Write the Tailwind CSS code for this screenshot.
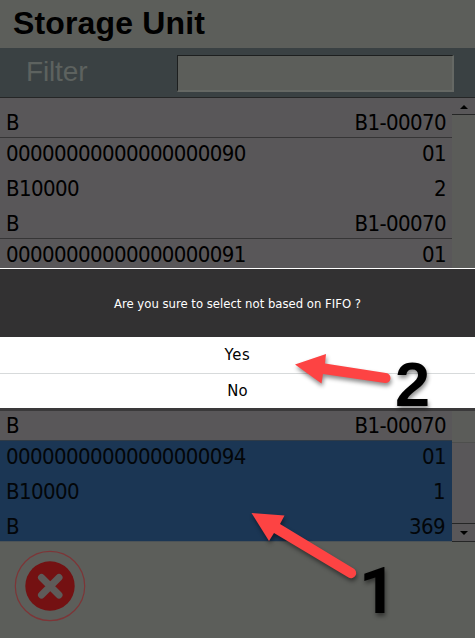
<!DOCTYPE html>
<html lang="en">
<head>
<meta charset="utf-8">
<title>Storage Unit</title>
<script src="https://cdn.jsdelivr.net/npm/@tailwindcss/browser@4"></script>
</head>
<body class="bg-[#5c5e5a]">
<div class="relative w-[475px] h-[638px] overflow-hidden bg-[#5c5e5a] text-black flex flex-col font-['Liberation_Sans',sans-serif]">
  <header class="h-12 shrink-0 pl-[13px] flex items-center"><h1 class="text-[32px] leading-[46px] -mt-[2px] tracking-[0.15px] font-bold whitespace-nowrap">Storage Unit</h1></header>
  <div class="h-[49px] shrink-0 bg-[#3a4143] flex items-start pl-[26px]">
    <span class="w-[151px] text-[28px] leading-[47px] tracking-[-0.15px] text-[#5d625f]">Filter</span>
    <div class="mt-[7px] w-[277px] h-[37px] bg-[#5c5e5a] border-t border-l border-t-[#1d1f1f] border-l-[#1d1f1f] border-b-2 border-r-2 border-b-[#656864] border-r-[#656864]"></div>
  </div>

  <main class="shrink-0 font-['DejaVu_Sans_Condensed','DejaVu_Sans',sans-serif] text-[22px] leading-[34px] tracking-[-0.6px] [font-stretch:condensed]">
    <div class="flex h-[171px] border-t border-[#252626]">
      <div class="w-[452px] h-[170px] overflow-hidden bg-[#595759]">
        <div class="h-[39px] pt-[8px] px-[6px] flex justify-between"><span>B</span><span>B1-00070</span></div>
        <div class="h-[101px] border-t border-[#363536]">
          <div class="h-[33px] px-[6px] flex justify-between"><span class="-mt-px">00000000000000000090</span><span class="-mt-px">01</span></div>
          <div class="h-[35px] pt-[1px] px-[6px] flex justify-between"><span>B10000</span><span>2</span></div>
          <div class="h-[32px] pt-[1px] px-[6px] flex justify-between"><span>B</span><span>B1-00070</span></div>
        </div>
        <div class="h-[29px] border-t border-[#363536] px-[6px] flex justify-between"><span class="-mt-px">00000000000000000091</span><span class="-mt-px">01</span></div>
      </div>
      <div class="w-[23px] bg-[#5b5c59]">
        <div class="h-[17px] bg-[#595759] border-b border-[#252626] flex items-center justify-center"><svg width="8" height="5" viewBox="0 0 8 5"><path d="M0 5L4 1L8 5Z"/></svg></div>
      </div>
    </div>

    <section class="h-[143px] bg-white flex flex-col border-t border-white tracking-normal">
      <div class="h-[68px] bg-[#323132]"><svg class="block" width="475" height="68" role="img"><text x="114" y="39" fill="#fff" font-size="12" textLength="247" lengthAdjust="spacingAndGlyphs">Are you sure to select not based on FIFO ?</text></svg></div>
      <div class="h-[37px] border-b border-[#d7dadb] text-center text-[16.5px] leading-[36px] tracking-[0.7px]">Yes</div>
      <div class="h-[34px] text-center text-[16.5px] leading-[33px] tracking-[0.2px]">No</div>
      <div class="h-[3px] bg-[#3a393a]"></div>
    </section>

    <div class="flex h-[131px]">
      <div class="w-[452px]">
        <div class="h-[29px] bg-[#595759] px-[6px] flex items-center justify-between"><span>B</span><span>B1-00070</span></div>
        <div class="h-[102px] border-t border-b border-t-[#303b46] border-b-[#4c5357] bg-[#1b3654] text-[#030609]">
          <div class="h-[33px] px-[6px] flex justify-between"><span class="-mt-px">00000000000000000094</span><span class="-mt-px">01</span></div>
          <div class="h-[35px] pt-[1px] px-[6px] flex justify-between"><span>B10000</span><span class="mr-[1px]">1</span></div>
          <div class="h-[32px] pt-[1px] px-[6px] flex justify-between"><span>B</span><span class="mr-[1px]">369</span></div>
        </div>
      </div>
      <div class="w-[23px] bg-[#595759] flex flex-col">
        <div class="h-[32px] bg-[#5b5c59] border-b border-[#4e4f4d]"></div>
        <div class="grow"></div>
        <div class="h-[19px] border-t border-b border-[#252626] flex items-center justify-center"><svg width="8" height="4" viewBox="0 0 8 4"><path d="M0 0H8L4 4Z"/></svg></div>
      </div>
    </div>
  </main>

  <footer class="pl-[14px] pt-[8px]">
    <svg class="block" width="72" height="72" viewBox="0 0 72 72">
      <circle cx="36" cy="36" r="34.7" fill="none" stroke="#7d3537" stroke-width="1.2"/>
      <circle cx="36" cy="36" r="24.7" fill="#741112"/>
      <path d="M27.5 27.5L45 45M45 27.5L27.5 45" stroke="#5e5b59" stroke-width="7" stroke-linecap="round"/>
    </svg>
  </footer>

  <svg class="absolute inset-0 [filter:drop-shadow(1px_3px_2px_rgba(0,0,0,.45))]" width="475" height="638" viewBox="0 0 475 638">
    <g fill="#fd4343">
      <path d="M295 364.5L326 354L325 363.5L386 373A5 5 0 0 1 385 383L323 374L321.500 383.500Z"/>
      <path d="M251.500 513L284.500 515.500L280 524L353.500 568.500A5 5 0 0 1 348.500 577.500L274 533L269 541Z"/>
    </g>
    <g font-weight="700">
      <text x="395" y="406" font-size="63" font-family="Liberation Sans, sans-serif">2</text>
      <text x="359" y="613" font-size="65" font-family="Roboto, sans-serif">1</text>
    </g>
  </svg>
</div>
</body>
</html>
